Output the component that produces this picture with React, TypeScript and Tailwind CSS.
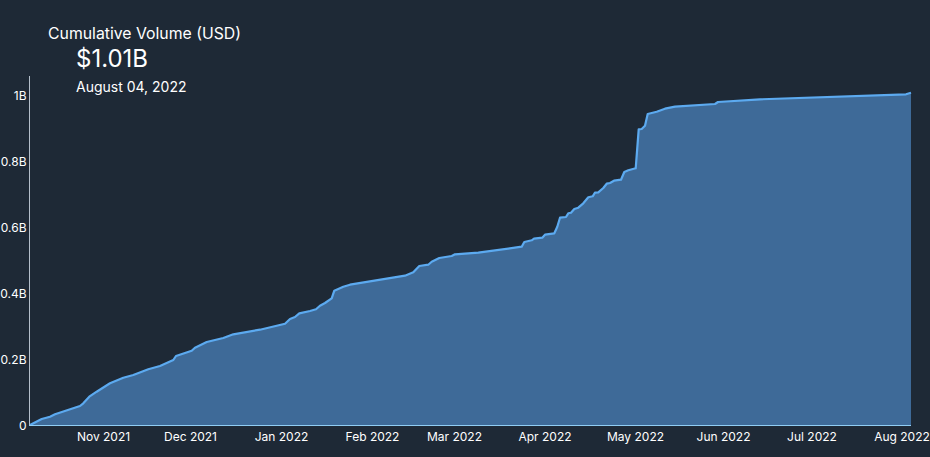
const curve: [number, number][] = [
  [30, 425], [41.7, 419], [50, 416.7], [55, 414.3], [80, 406], [83.3, 403.3], [89.3, 396.7], [96.7, 391.7],
  [110, 383.3], [123.3, 377.7], [133.3, 375], [148.3, 369.3], [160, 366], [173.3, 360], [176, 356],
  [191.7, 350.7], [195, 347.7], [206.7, 342], [223.3, 338], [233.3, 334.3], [260, 329.7], [285, 323.7],
  [290, 319], [295, 317], [299.3, 313.3], [310, 311], [316, 309.3], [320, 305.7], [325, 303], [331.7, 298.3],
  [334.3, 290.7], [343.3, 286.7], [350, 284.7], [405, 275.7], [413.3, 272.3], [419.3, 266], [428.3, 264.7],
  [431.7, 261.7], [439.3, 258], [451.7, 256], [455, 254.3], [478.3, 252.7], [521.7, 246.7], [524.3, 242],
  [531.7, 240.3], [534, 238.7], [542.3, 237.7], [545, 234.7], [554.3, 233.3], [557.3, 226.7], [560, 217.7],
  [566, 217], [568.3, 213.3], [571, 212.7], [574.3, 209], [578.3, 207.7], [583.3, 203.3], [588.3, 197.3],
  [592.7, 196.3], [595, 192.7], [598.3, 192.3], [603.3, 188], [606.7, 183.7], [610, 183], [614, 180.7],
  [621, 179.7], [624.3, 172], [628.3, 170.3], [635.7, 168.3], [638.7, 129.3], [641.7, 129], [645, 125.7],
  [647.7, 114], [656.7, 111.7], [665, 108.7], [675, 106.7], [715, 104], [718, 102], [760, 99.3], [906, 94.3],
  [911, 92.7],
];
const line = curve.map(([x, y], i) => `${i ? "L" : "M"}${x} ${y}`).join(" ");
const area = `${line} L911 425.5 L30 425.5 Z`;

const yTicks: [string, number][] = [["1B", 95], ["0.8B", 161], ["0.6B", 227], ["0.4B", 293], ["0.2B", 359], ["0", 425]];
const xTicks: [string, number][] = [
  ["Nov 2021", 103.5], ["Dec 2021", 190.5], ["Jan 2022", 281.5], ["Feb 2022", 372.5], ["Mar 2022", 454.5],
  ["Apr 2022", 545], ["May 2022", 635.5], ["Jun 2022", 723.5], ["Jul 2022", 812], ["Aug 2022", 902],
];

export default function App() {
  return (
    <div className="relative w-[930px] h-[457px] overflow-hidden bg-[#1e2936] text-white font-['Inter',sans-serif]">
      <svg className="absolute inset-0" width="930" height="457" viewBox="0 0 930 457">
        <path d={area} fill="#3e6a98" />
        <path d={line} fill="none" stroke="#5caaf0" strokeWidth="2.2" strokeLinejoin="round" />
        <line x1="29.5" y1="76" x2="29.5" y2="426" stroke="#b4bfcb" strokeWidth="1" />
        <line x1="29" y1="425.5" x2="911" y2="425.5" stroke="#90cdf4" strokeWidth="1" />
        <g fill="#ffffff" fontSize="12" fontFamily="Inter, sans-serif">
          {yTicks.map(([t, y]) => (
            <text key={t} x="26.5" y={y + 4.5} textAnchor="end">{t}</text>
          ))}
          {xTicks.map(([t, x]) => (
            <text key={t} x={x} y="441" textAnchor="middle">{t}</text>
          ))}
        </g>
      </svg>
      <div className="relative flex flex-col pt-[25px] pl-12">
        <div className="text-[15.8px] leading-[18px]">Cumulative Volume (USD)</div>
        <div className="pl-7 text-2xl leading-[31px]">$1.01B</div>
        <div className="pl-7 text-sm leading-5 mt-[3px]">August 04, 2022</div>
      </div>
    </div>
  );
}
